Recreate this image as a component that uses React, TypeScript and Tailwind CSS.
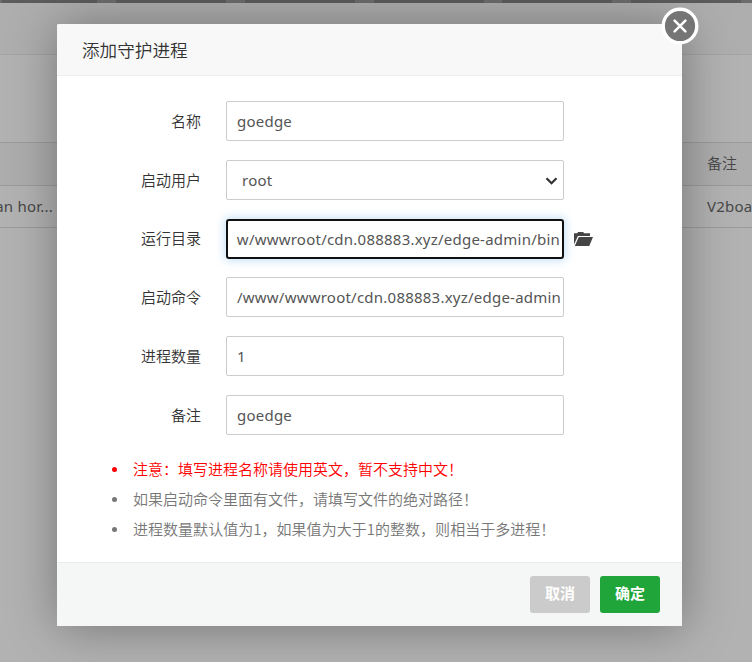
import type { ReactNode } from 'react';

const FIELD =
  'flex h-10 w-[338px] items-center overflow-hidden whitespace-nowrap rounded-[2px] border border-[#ccc] px-2.5 text-[#555]';

const LATIN = "font-['Noto_Sans','Noto_Sans_CJK_SC',sans-serif] text-[15px] tracking-[0.23px]";

const TABS = ['w-[95px] ml-[2px]', 'w-[110px] ml-[19px]', 'w-[110px] ml-[19px]', 'w-[110px] ml-[19px]', 'w-[110px] ml-[18px]', 'w-[110px] ml-[19px]'];

const NOTES = [
  { text: '注意：填写进程名称请使用英文，暂不支持中文！', color: 'text-[#ff0000]' },
  { text: '如果启动命令里面有文件，请填写文件的绝对路径！', color: 'text-[#777]' },
  { text: '进程数量默认值为1，如果值为大于1的整数，则相当于多进程！', color: 'text-[#777] tracking-[0.03px]' },
];

function Row({ label, children }: { label: string; children: ReactNode }) {
  return (
    <div className="flex h-10 items-center">
      <span className="w-36 shrink-0 text-right text-[15px] font-[350] text-[#333]">{label}</span>
      <div className="ml-[25px] flex items-center">{children}</div>
    </div>
  );
}

function Backdrop() {
  return (
    <div className="flex h-full flex-col bg-[#b2b2b2] text-[15px] text-[#484848]">
      <div className="flex h-[3px] shrink-0 overflow-hidden bg-[#6c6c6c]">
        {TABS.map((tab, i) => (
          <div key={i} className={`h-full shrink-0 bg-[#5c5c5c] ${tab}`} />
        ))}
      </div>
      <div className="h-[52px] shrink-0 border-b border-[#a3a3a3] bg-[#aeaeae]" />
      <div className="h-[87px] shrink-0" />
      <div className="flex h-11 shrink-0 items-center border-y border-[#9b9b9b] bg-[#adadad] pb-0.5">
        <span className="ml-[707px] shrink-0 font-[350] whitespace-nowrap">备注</span>
      </div>
      <div className={`flex h-[42px] shrink-0 items-center overflow-hidden whitespace-nowrap border-b border-[#9b9b9b] ${LATIN}`}>
        <span className="flex w-[53px] shrink-0 justify-end">an hor...</span>
        <span className="ml-[654px] shrink-0">V2board</span>
      </div>
    </div>
  );
}

function CloseButton() {
  return (
    <button className="absolute top-[-17px] right-[-17px] h-[38px] w-[38px]" aria-label="close">
      <svg viewBox="0 0 38 38" className="h-full w-full">
        <circle cx="19" cy="19" r="16.8" fill="#757575" stroke="#fff" strokeWidth="3.4" />
        <path d="M13.6 13.6l10.8 10.8M24.4 13.6L13.6 24.4" stroke="#fff" strokeWidth="2.5" strokeLinecap="round" />
      </svg>
    </button>
  );
}

export default function App() {
  return (
    <div className="relative h-[662px] w-[752px] overflow-hidden font-['Noto_Sans_CJK_SC',sans-serif]">
      <Backdrop />

      <div className="absolute top-6 left-[57px] flex h-[602px] w-[625px] flex-col rounded-t-[2px] bg-white shadow-[1px_1px_50px_rgba(0,0,0,0.35)]">
        <div className="flex h-[52px] shrink-0 items-center rounded-t-[2px] border-b border-[#eee] bg-[#f8f8f8] pt-px pl-[25px] text-[17.6px] font-[350] text-[#333]">
          添加守护进程
        </div>
        <CloseButton />

        <div className="flex flex-col gap-[18.75px] pt-[25px]">
          <Row label="名称">
            <div className={`${FIELD} ${LATIN}`}>goedge</div>
          </Row>
          <Row label="启动用户">
            <div className={`${FIELD} ${LATIN} justify-between pr-[5px] pl-[15px]`}>
              root
              <svg width="13" height="8" viewBox="0 0 13 8" fill="none" stroke="#333" strokeWidth="2.2" className="mt-0.5">
                <path d="M1.5 1.2L6.5 6.2L11.5 1.2" />
              </svg>
            </div>
          </Row>
          <Row label="运行目录">
            <div className="rounded-[3px] shadow-[0_0_8px_2px_rgba(102,175,233,0.35)]">
              <div className="flex h-10 w-[338px] items-center rounded-[3px] border-2 border-[#101010] bg-white px-[2px] pt-px">
                <div className={`flex w-full justify-end overflow-hidden pl-[7px] whitespace-nowrap text-[#555] ${LATIN}`}>
                  w/wwwroot/cdn.088883.xyz/edge-admin/bin
                </div>
              </div>
            </div>
            <svg className="ml-2.5" width="19" height="14" viewBox="0 0 19 14" fill="#444">
              <path d="M0 12.5V1.3H3.3L4 0H9.2L10 1.3H16V3.9H3.9L0 12.5Z" />
              <path d="M4.8 4.9H19L15.2 14H.8Z" />
            </svg>
          </Row>
          <Row label="启动命令">
            <div className={`${FIELD} ${LATIN} pr-[2px]`}>/www/wwwroot/cdn.088883.xyz/edge-admin</div>
          </Row>
          <Row label="进程数量">
            <div className={`${FIELD} ${LATIN}`}>1</div>
          </Row>
          <Row label="备注">
            <div className={`${FIELD} ${LATIN}`}>goedge</div>
          </Row>
        </div>

        <ul className="mt-[19px] ml-[55px] text-[15px] leading-[30px] font-[350] whitespace-nowrap">
          {NOTES.map((note) => (
            <li key={note.text} className={`flex items-center ${note.color}`}>
              <span className="mt-0.5 mr-4 h-[5px] w-[5px] rounded-full bg-current" />
              {note.text}
            </li>
          ))}
        </ul>

        <div className="mt-auto flex h-16 shrink-0 items-center justify-end gap-2.5 border-t border-[#e8ecec] bg-[#f5f7f7] pr-[22px] text-[15px] font-bold text-white">
          <button className="h-[37px] w-[60px] rounded-[3px] bg-[#cbcbcb] pb-0.5">取消</button>
          <button className="h-[37px] w-[60px] rounded-[3px] bg-[#20a53a] pb-0.5">确定</button>
        </div>
      </div>
    </div>
  );
}
